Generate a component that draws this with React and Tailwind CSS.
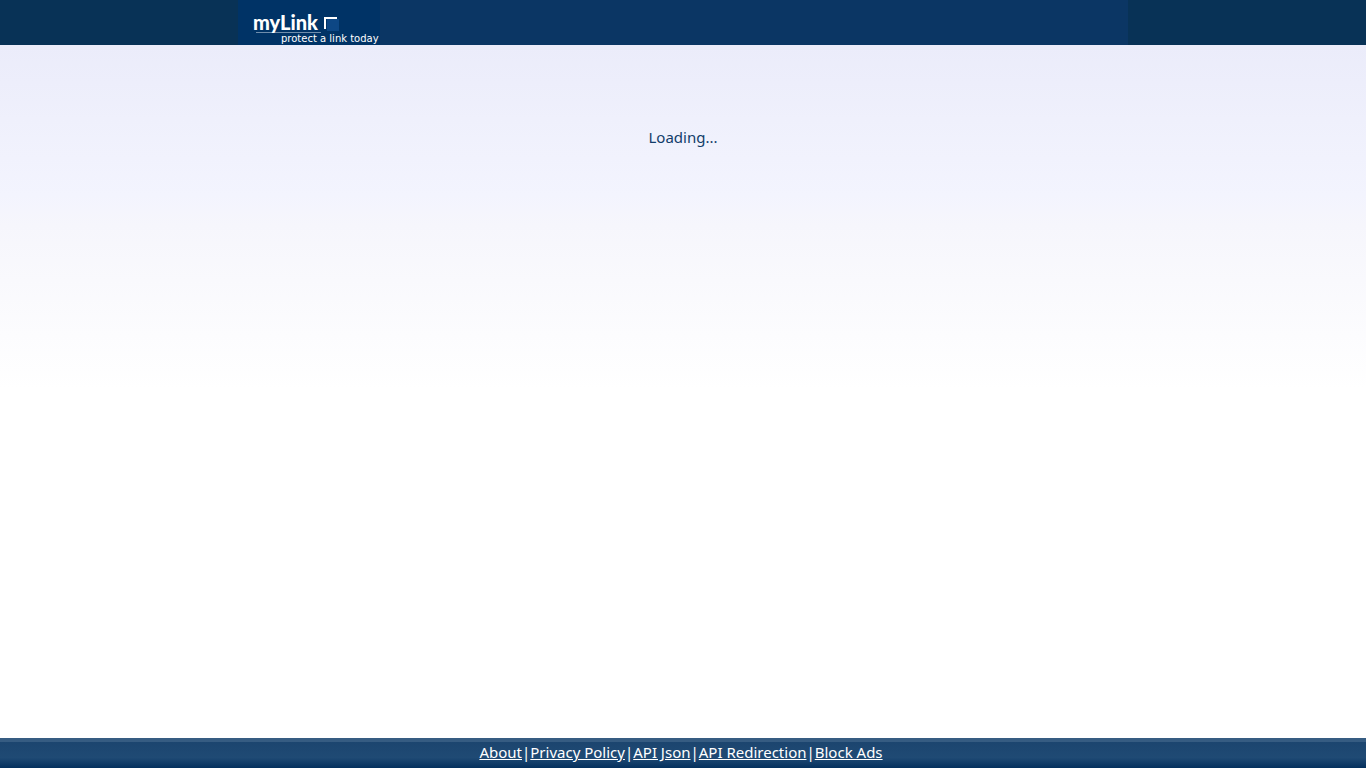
const FOOTER_LINKS = [
  { href: '#about', label: 'About' },
  { href: '#privacy', label: 'Privacy Policy' },
  { href: '#api-json', label: 'API Json' },
  { href: '#api-redirection', label: 'API Redirection' },
  { href: '#block-ads', label: 'Block Ads' },
]

function Logo() {
  return (
    <svg width="142" height="45" viewBox="0 0 142 45" className="block" role="img" aria-label="myLink">
      <rect width="142" height="45" fill="#003366" />
      <path d="M18 32.5H83" stroke="#6f8dac" />
      <text x="15" y="30" fill="#fff" fontFamily="Lato, sans-serif" fontSize="20" fontWeight="900">
        myLink
      </text>
      <rect x="89" y="19" width="12" height="12" fill="#0d4785" />
      <path d="M87 29V18H99" fill="none" stroke="#fff" strokeWidth="2" />
      <text x="43" y="42" fill="#fff" fontFamily='"DejaVu Sans", sans-serif' fontSize="10">
        protect a link today
      </text>
    </svg>
  )
}

function Header() {
  return (
    <header className="bg-[#083256]">
      <div className="mx-auto max-w-[890px] bg-[#0b3664]">
        <a href="#home" className="inline-block align-top">
          <Logo />
        </a>
      </div>
    </header>
  )
}

function Footer() {
  return (
    <footer className="border-t-4 border-[#365c82] bg-linear-to-b from-[#1c456f] via-[#1f4a74] via-60% to-[#04305d] pr-1 pb-1.5 text-center text-[15px] leading-5 text-white">
      {FOOTER_LINKS.map((link, i) => (
        <span key={link.href}>
          {i > 0 && '|'}
          <a href={link.href} className="underline">{link.label}</a>
        </span>
      ))}
    </footer>
  )
}

export default function App() {
  return (
    <div className="flex min-h-screen flex-col bg-white font-['Noto_Sans',sans-serif]">
      <Header />
      <main className="flex-1 bg-[linear-gradient(to_bottom,#ebecfa_0,#f3f4fe_150px,#f6f6fc_180px,#ffffff_345px)] pt-20 text-center text-[#123d6a]">
        <p className="text-[15px] leading-6">Loading...</p>
      </main>
      <Footer />
    </div>
  )
}
